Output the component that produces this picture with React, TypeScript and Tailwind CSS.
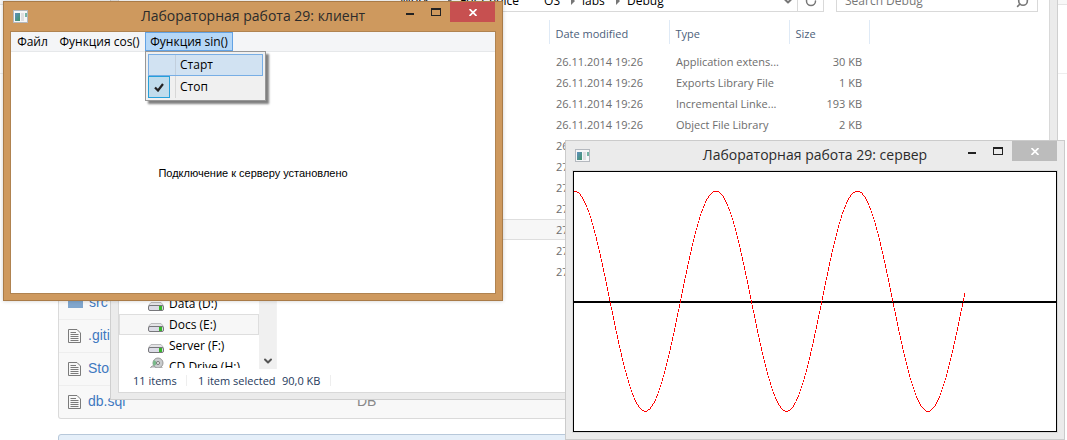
import React from "react";
import { ChevronDown, RotateCw, Search } from "lucide-react";

type Theme = {
  frame: string;
  inner: string;
  close: string;
};

const orange: Theme = {
  frame: "border-[#a97b48] bg-[#ce995e]",
  inner: "border-[#b08350]",
  close: "bg-[#c75050]",
};

const grey: Theme = {
  frame: "border-[#cbcbcb] bg-[#ebebeb]",
  inner: "border-[#d9d9d9]",
  close: "bg-[#bcbcbc]",
};

function AppIcon() {
  return (
    <svg width="15" height="13" viewBox="0 0 15 13" shapeRendering="crispEdges" aria-hidden="true">
      <defs>
        <linearGradient id="pane" x1="0" y1="0" x2="1" y2="1">
          <stop offset="0" stopColor="#5f8fc0" />
          <stop offset="1" stopColor="#3f9468" />
        </linearGradient>
      </defs>
      <rect width="15" height="13" fill="#b4b8be" />
      <rect x="1" y="1" width="13" height="11" fill="#f6f7f8" />
      <rect x="2" y="3" width="5" height="8" fill="url(#pane)" />
      <rect x="8" y="3" width="3" height="8" fill="#dedfe2" />
      <rect x="12" y="3" width="2" height="4" fill="#76b3a4" />
    </svg>
  );
}

function AppWindow({ title, theme, children }: { title: string; theme: Theme; children: React.ReactNode }) {
  return (
    <section className={`flex h-[300px] w-[500px] flex-col border px-[6px] pb-[6px] ${theme.frame}`}>
      <header className="flex h-[29px] items-start pl-[3px]">
        <span className="w-[96px] pt-2">
          <AppIcon />
        </span>
        <h1 className="flex-1 whitespace-nowrap pt-[3px] text-center text-[14px] leading-[22px] text-[#2b2b2b]">{title}</h1>
        <button aria-label="Свернуть" className="flex h-5 w-[25px] items-center justify-center">
          <svg width="8" height="8" shapeRendering="crispEdges"><rect y="5" width="8" height="2" fill="#222" /></svg>
        </button>
        <button aria-label="Развернуть" className="flex h-5 w-[28px] items-center justify-center">
          <svg width="10" height="8" shapeRendering="crispEdges">
            <path d="M0 0H10V8H0ZM1 2V7H9V2Z" fill="#222" fillRule="evenodd" />
          </svg>
        </button>
        <button aria-label="Закрыть" className={`mr-px flex h-5 w-[45px] items-center justify-center ${theme.close}`}>
          <svg width="8" height="7" viewBox="0 0 8 7"><path d="M0.5 0L7.5 7M7.5 0L0.5 7" stroke="#fff" strokeWidth="1.7" /></svg>
        </button>
      </header>
      <div className={`flex flex-1 flex-col border bg-white ${theme.inner}`}>{children}</div>
    </section>
  );
}

function ClientWindow() {
  return (
    <AppWindow title="Лабораторная работа 29: клиент" theme={orange}>
      <nav className="flex h-5 border-b border-[#e6e8ea] bg-[#f4f5f7] text-[12px] leading-[19px] text-black">
        <button className="w-[43px]">Файл</button>
        <button className="w-[91px] whitespace-nowrap">Функция cos()</button>
        <div className="relative">
          <button className="h-[19px] w-[88px] whitespace-nowrap border border-[#62a2e4] bg-[#b5d7f7] leading-[17px]">
            Функция sin()
          </button>
          <div className="absolute left-0 top-[19px] w-[121px] border border-[#979797] bg-[#f0f0f0] p-[2px] shadow-[3px_3px_2px_rgba(0,0,0,0.5)]">
            <button className="flex h-[22px] w-full items-stretch border border-[#78aee5] bg-[#d1e2f2] text-left leading-[20px]">
              <span className="w-[27px] border-r border-[#c2cfdd]" />
              <span className="pl-1">Старт</span>
            </button>
            <button className="flex h-[22px] w-full items-stretch text-left leading-[22px]">
              <span className="flex w-[28px] border-r border-[#d7d7d7]">
                <span className="flex w-[22px] items-center justify-center border border-[#26a0da] bg-[#c0dcec]">
                  <svg width="10" height="9" viewBox="0 0 10 9"><path d="M1 4.5L4 7.5L9 1" fill="none" stroke="#222" strokeWidth="2.2" /></svg>
                </span>
              </span>
              <span className="pl-1">Стоп</span>
            </button>
          </div>
        </div>
      </nav>
      <p className="flex flex-1 items-center justify-center pt-[2px] font-['Liberation_Sans',Arial,sans-serif] text-[11px] text-black">
        Подключение к серверу установлено
      </p>
    </AppWindow>
  );
}

const PERIOD = 141.4;
const AMPLITUDE = 110;
const AXIS = 129;

function wave(x: number) {
  return AXIS - AMPLITUDE * Math.cos((2 * Math.PI * x) / PERIOD);
}

/* One vertical run of pixels per column; steep runs leave a gap before the next. */
function wavePath() {
  let d = "";
  for (let x = 0; x < 391; x++) {
    const a = Math.round(wave(x - 0.5));
    const b = Math.round(wave(x + 0.5));
    const top = Math.min(a, b);
    const run = Math.abs(a - b);
    const length = run > 2 ? run - 1 : Math.max(run, 1);
    d += `M${x} ${top}h1v${length}h-1z`;
  }
  return d;
}

function ServerWindow() {
  return (
    <AppWindow title="Лабораторная работа 29: сервер" theme={grey}>
      <div className="flex-1 border border-black">
        <svg className="block" width="482" height="259" shapeRendering="crispEdges" role="img" aria-label="cos">
          <rect y="129" width="482" height="2" fill="#000" />
          <path d={wavePath()} fill="#f00" />
        </svg>
      </div>
    </AppWindow>
  );
}

function Arrow() {
  return <svg width="4" height="8" className="shrink-0" aria-hidden="true"><path d="M0 0L4 4L0 8Z" fill="#777" /></svg>;
}

function Drive({ disc = false }: { disc?: boolean }) {
  return (
    <svg width="18" height="16" viewBox="0 0 18 16" className="shrink-0" aria-hidden="true">
      {disc ? (
        <>
          <path d="M1 14L5 9H14L17 14Z" fill="#d4d4d8" stroke="#999" />
          <circle cx="11" cy="6" r="5" fill="#c9ccce" stroke="#999" />
          <path d="M11 6L7 3A5 5 0 0 0 7 9Z" fill="#79b98a" />
          <circle cx="11" cy="6" r="1.5" fill="#fff" stroke="#777" />
        </>
      ) : (
        <>
          <path d="M4 6.500H14L16.500 9.500H1.500Z" fill="#e4e4e6" stroke="#bababc" />
          <rect x="1.500" y="9.500" width="15" height="5" rx="1.500" fill="#dcdce6" stroke="#77777b" />
          <rect x="12" y="10" width="3" height="4" fill="#37b52b" />
        </>
      )}
    </svg>
  );
}

const drives = ["Data (D:)", "Docs (E:)", "Server (F:)", "CD Drive (H:)"];

const files = [
  { date: "26.11.2014 19:26", type: "Application extens...", size: "30 KB" },
  { date: "26.11.2014 19:26", type: "Exports Library File", size: "1 KB" },
  { date: "26.11.2014 19:26", type: "Incremental Linke...", size: "193 KB" },
  { date: "26.11.2014 19:26", type: "Object File Library", size: "2 KB" },
  { date: "26.11.2014 19:26", type: "", size: "" },
  { date: "27.11.2014 19:26", type: "", size: "" },
  { date: "27.11.2014 19:26", type: "", size: "" },
  { date: "27.11.2014 19:26", type: "", size: "" },
  { date: "27.11.2014 19:26", type: "", size: "", selected: true },
  { date: "27.11.2014 19:26", type: "", size: "" },
  { date: "27.11.2014 19:26", type: "", size: "" },
];

const headCell =
  "border-l border-[#dfeaf6] pl-[6px] pt-[3px] text-left align-middle font-normal text-[#4c607a]";

function Explorer() {
  return (
    <section className="flex flex-col border border-t-0 border-[#cfcfcf] bg-[#ebebeb] px-[7px] pb-[6px]">
      <div className="flex flex-col border border-t-0 border-[#d9d9d9] bg-white text-[11px]">
        <div className="flex h-6 pr-[11px] leading-[24px] text-black">
          <div className="flex flex-1 items-center border-b border-[#d9d9d9] pl-[281px] pt-[2px] text-[12px]">
            <span className="w-[48px]">Work</span>
            <Arrow />
            <span className="ml-2 w-[72px]">For Choice</span>
            <span className="w-[28px] text-right">OS</span>
            <span className="ml-[11px] flex"><Arrow /></span>
            <span className="ml-[7px] w-[34px]">labs</span>
            <Arrow />
            <span className="ml-[7px] flex-1">Debug</span>
            <ChevronDown className="mr-[3px] size-[12px] text-[#777]" strokeWidth={4} />
          </div>
          <button aria-label="Refresh" className="flex w-[27px] items-center justify-center border border-[#d9d9d9] pt-[2px]">
            <RotateCw className="size-[12px] text-[#777]" strokeWidth={3} />
          </button>
          <label className="ml-[12px] flex w-[202px] items-center border border-[#d9d9d9] pl-2 pr-2 pt-[2px]">
            <input
              aria-label="Search Debug"
              placeholder="Search Debug"
              className="min-w-0 flex-1 bg-transparent outline-none placeholder:text-[#777] text-[12px]"
            />
            <Search className="size-[13px] -scale-x-100 text-[#777]" strokeWidth={3} />
          </label>
        </div>
        <div className="flex h-[357px]">
          <aside className="flex w-[157px] overflow-hidden">
            <ul className="w-[140px] pt-[281px] text-black">
              {drives.map((name, i) => (
                <li
                  key={name}
                  className={`flex gap-1 overflow-hidden border pl-[27px] leading-[19px] ${
                    i === 1 ? "border-[#dedede] bg-[#f7f7f7]" : "border-transparent"
                  } ${i === 3 ? "h-[13px] items-start" : "h-[21px] items-center"}`}
                >
                  <Drive disc={i === 3} />
                  <span className="whitespace-nowrap text-[12px]">{name}</span>
                </li>
              ))}
            </ul>
            <div className="flex flex-1 items-end justify-center bg-[#f0f0f0] pb-[2px]">
              <ChevronDown className="size-[12px] text-[#555]" strokeWidth={4} />
            </div>
          </aside>
          <div className="flex-1 border-l border-[#f2f2f2] pt-2">
            <table className="w-full table-fixed border-collapse leading-[20px] text-[#6d6d6d]">
              <colgroup>
                <col className="w-[272px]" />
                <col className="w-[120px]" />
                <col className="w-[120px]" />
                <col className="w-[80px]" />
                <col />
              </colgroup>
              <thead>
                <tr className="h-[24px]">
                  <th />
                  <th className={headCell}>Date modified</th>
                  <th className={headCell}>Type</th>
                  <th className={headCell}>Size</th>
                  <th className="border-l border-[#dfeaf6]" />
                </tr>
                <tr className="h-[7px]"><td /></tr>
              </thead>
              <tbody>
                {files.map((file, i) => (
                  <tr key={i} className={`h-[21px] ${file.selected ? "bg-[#f7f7f7] outline -outline-offset-1 outline-[#dedede]" : ""}`}>
                    <td className="p-0" />
                    <td className="whitespace-nowrap p-0 pl-[7px]">{file.date}</td>
                    <td className="whitespace-nowrap p-0 pl-[7px]">{file.type}</td>
                    <td className="p-0 pr-[7px] text-right">{file.size}</td>
                    <td className="p-0" />
                  </tr>
                ))}
              </tbody>
            </table>
          </div>
        </div>
        <footer className="flex h-[23px] items-center pl-[14px] leading-[11px] text-[#1e395b]">
          <span className="w-[54px] border-r border-[#eee]">11 items</span>
          <span className="w-[95px] whitespace-nowrap pl-[11px]">1 item selected</span>
          <span className="w-[49px] whitespace-nowrap border-r border-[#eee]">90,0 KB</span>
        </footer>
      </div>
    </section>
  );
}

function FileIcon() {
  return (
    <svg width="13" height="14" viewBox="0 0 13 14" fill="none" stroke="#7b7b7b" aria-hidden="true">
      <path d="M0.500 0.500H9L12.500 4V13.500H0.500Z" />
      <path d="M2.500 3.500H8M2.500 5.500H10.500M2.500 7.500H10.500M2.500 9.500H10.500M2.500 11.500H10.500" />
    </svg>
  );
}

const repoFiles = [
  { name: ".gitignore", note: "" },
  { name: "StoreApp", note: "" },
  { name: "db.sql", note: "DB" },
];

function RepoPage() {
  return (
    <main className="pb-0 font-['Liberation_Sans',Arial,sans-serif] text-[14px]">
      <div className="h-[5px] border-b border-[#e5e5e5] bg-[#f8f8f8]" />
      <div className="h-[69px] border-b border-[#eee]" />
      <div className="mx-[58px] mt-[212px]">
        <ul className="rounded-b-[3px] border border-t-0 border-[#dadada] bg-[#f8f8f8] text-[#4078c0]">
          <li className="flex h-[33px] items-center gap-[6px] pl-[9px]">
            <svg width="15" height="11" aria-hidden="true"><path d="M0 0H6V1H15V11H0Z" fill="#80a6cd" /></svg>
            <a href="#src">src</a>
          </li>
          {repoFiles.map((file) => (
            <li key={file.name} className="flex h-[33px] items-center gap-[7px] border-t border-[#eee] pb-px pl-[9px]">
              <FileIcon />
              <a href={`#${file.name}`} className="w-[262px]">{file.name}</a>
              <span className="text-[#888]">{file.note}</span>
            </li>
          ))}
        </ul>
        <div className="mt-[15px] h-[40px] rounded-t-[3px] border border-[#b7c8da] bg-[#e5eff9]" />
      </div>
    </main>
  );
}

export default function App() {
  return (
    <div className="relative h-screen w-full overflow-hidden bg-white font-['Open_Sans','Noto_Sans',sans-serif]">
      <RepoPage />
      <div className="absolute -top-[12px] left-[110px] right-[9px]">
        <Explorer />
      </div>
      <div className="absolute left-[3px] top-[1px] shadow-[0_0_4px_rgba(0,0,0,0.2)]">
        <ClientWindow />
      </div>
      <div className="absolute right-[2px] top-[140px]">
        <ServerWindow />
      </div>
    </div>
  );
}
